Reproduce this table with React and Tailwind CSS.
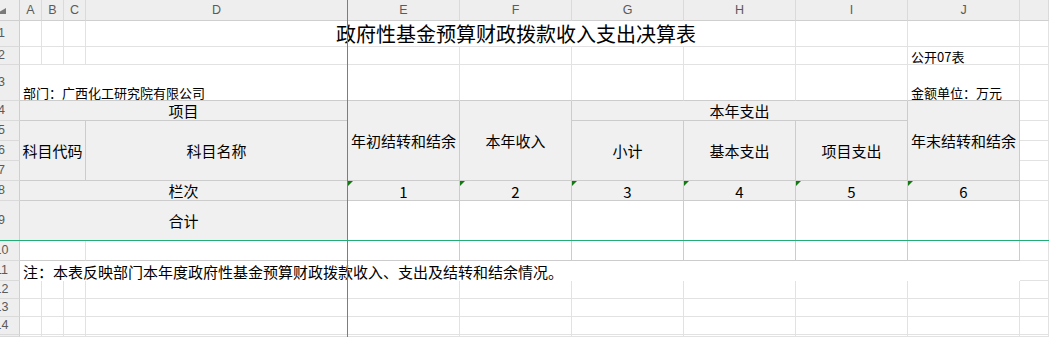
import React from "react";

const cjk = { fontFamily: '"Noto Sans CJK SC", "Noto Sans", sans-serif' };

const COLS = ["A", "B", "C", "D", "E", "F", "G", "H", "I", "J", ""];

function ColHead({ children }) {
  return (
    <div className="flex items-center justify-center bg-[#eeeeee] border-r border-b border-r-[#dadada] border-b-[#cfcfcf] text-[12.5px] text-[#5a5a5a] font-['Liberation_Sans',sans-serif]">
      {children}
    </div>
  );
}

function RowHead({ n }) {
  return (
    <div className="flex items-center overflow-hidden bg-[#eeeeee] border-r border-b border-r-[#cfcfcf] border-b-[#dadada] text-[12.5px] text-[#5a5a5a] font-['Liberation_Sans',sans-serif]">
      <div className="w-[31px] ml-[-14px] shrink-0 text-center leading-none">{n}</div>
    </div>
  );
}

// plain sheet cell with default gridlines
function G({ className = "" }) {
  return <div className={"border-r border-b border-[#e2e2e2] " + className} />;
}

// numbered cell of the table with a "number stored as text" marker
function Num({ n }) {
  return (
    <div className="relative flex items-center justify-center bg-[#f0f0f0] border-r border-b border-[#cccccc] text-[15px] leading-none text-black">
      <span className="absolute left-0 top-0 w-0 h-0 border-t-[5px] border-r-[5px] border-t-[#137a13] border-r-transparent" />
      <span className="pt-[1px]">{n}</span>
    </div>
  );
}

export default function App() {
  return (
    <div
      className="relative grid w-[1049px] h-[337px] overflow-hidden bg-white grid-cols-[20px_22px_22px_22px_262px_112px_112px_112px_112px_112px_112px_1fr] grid-rows-[21px_26px_18px_36px_20px_20px_20px_20px_20px_40px_20px_20px_18px_18px_18px_1fr]"
      style={cjk}
    >
      {/* column headers */}
      <div className="flex items-center overflow-hidden bg-[#eeeeee] border-r border-b border-r-[#cfcfcf] border-b-[#cfcfcf]">
        <svg width="10" height="6" viewBox="0 0 10 6" className="ml-[-4px] mt-[2px] shrink-0">
          <polygon points="10,0 10,6 0,6" fill="#7a7a7a" />
        </svg>
      </div>
      {COLS.map((c, i) => (
        <ColHead key={i}>{c}</ColHead>
      ))}

      {/* row 1: title */}
      <RowHead n="1" />
      <G />
      <G />
      <G />
      <G />
      <div className="col-span-3 flex items-center justify-center border-b border-[#e2e2e2] text-[20px] leading-none text-black whitespace-nowrap">
        政府性基金预算财政拨款收入支出决算表
      </div>
      <G />
      <G />
      <G />
      <G />

      {/* row 2 */}
      <RowHead n="2" />
      <G />
      <G />
      <G />
      <G />
      <G />
      <G />
      <G />
      <G />
      <G />
      <div className="flex items-end pl-[3px] pb-[1px] border-r border-b border-[#e2e2e2] text-[13px] leading-none text-black whitespace-nowrap">
        公开07表
      </div>
      <G />

      {/* row 3 */}
      <RowHead n="3" />
      <div className="col-span-4 flex items-end pl-[3px] pb-[1px] border-r border-b border-r-[#e2e2e2] border-b-[#cccccc] text-[13px] leading-none text-black whitespace-nowrap">
        部门：广西化工研究院有限公司
      </div>
      <G className="border-b-[#cccccc]" />
      <G className="border-b-[#cccccc]" />
      <G className="border-b-[#cccccc]" />
      <G className="border-b-[#cccccc]" />
      <G className="border-b-[#cccccc]" />
      <div className="flex items-end pl-[3px] pb-[1px] border-r border-b border-r-[#e2e2e2] border-b-[#cccccc] text-[13px] leading-none text-black whitespace-nowrap">
        金额单位：万元
      </div>
      <G />

      {/* row 4 */}
      <RowHead n="4" />
      <div className="col-span-4 flex items-center justify-center bg-[#f0f0f0] border-r border-b border-[#cccccc] text-[15px] leading-none text-black">
        项目
      </div>
      <div className="row-span-4 flex items-center justify-center bg-[#f0f0f0] border-r border-b border-[#cccccc] text-[15px] leading-none text-black whitespace-nowrap">
        年初结转和结余
      </div>
      <div className="row-span-4 flex items-center justify-center bg-[#f0f0f0] border-r border-b border-[#cccccc] text-[15px] leading-none text-black">
        本年收入
      </div>
      <div className="col-span-3 flex items-center justify-center bg-[#f0f0f0] border-r border-b border-[#cccccc] text-[15px] leading-none text-black">
        本年支出
      </div>
      <div className="row-span-4 flex items-center justify-center bg-[#f0f0f0] border-r border-b border-[#cccccc] text-[15px] leading-none text-black whitespace-nowrap">
        年末结转和结余
      </div>
      <G />

      {/* row 5 */}
      <RowHead n="5" />
      <div className="col-span-3 row-span-3 flex items-center justify-center bg-[#f0f0f0] border-r border-b border-[#cccccc] text-[15px] leading-none text-black whitespace-nowrap">
        科目代码
      </div>
      <div className="row-span-3 flex items-center justify-center bg-[#f0f0f0] border-r border-b border-[#cccccc] text-[15px] leading-none text-black">
        科目名称
      </div>
      <div className="row-span-3 flex items-center justify-center bg-[#f0f0f0] border-r border-b border-[#cccccc] text-[15px] leading-none text-black">
        小计
      </div>
      <div className="row-span-3 flex items-center justify-center bg-[#f0f0f0] border-r border-b border-[#cccccc] text-[15px] leading-none text-black">
        基本支出
      </div>
      <div className="row-span-3 flex items-center justify-center bg-[#f0f0f0] border-r border-b border-[#cccccc] text-[15px] leading-none text-black">
        项目支出
      </div>
      <G />

      {/* rows 6-7 */}
      <RowHead n="6" />
      <G />
      <RowHead n="7" />
      <G />

      {/* row 8 */}
      <RowHead n="8" />
      <div className="col-span-4 flex items-center justify-center bg-[#f0f0f0] border-r border-b border-[#cccccc] text-[15px] leading-none text-black">
        栏次
      </div>
      <Num n="1" />
      <Num n="2" />
      <Num n="3" />
      <Num n="4" />
      <Num n="5" />
      <Num n="6" />
      <G />

      {/* row 9 */}
      <RowHead n="9" />
      <div className="col-span-4 flex items-center justify-center bg-[#f0f0f0] border-r border-b border-[#cccccc] text-[15px] leading-none text-black">
        合计
      </div>
      <div className="border-r border-b border-[#cccccc]" />
      <div className="border-r border-b border-[#cccccc]" />
      <div className="border-r border-b border-[#cccccc]" />
      <div className="border-r border-b border-[#cccccc]" />
      <div className="border-r border-b border-[#cccccc]" />
      <div className="border-r border-b border-[#cccccc]" />
      <G />

      {/* row 10 */}
      <RowHead n="10" />
      <div className="col-span-3 border-r border-b border-r-[#e2e2e2] border-b-[#cccccc]" />
      <div className="border-r border-b border-r-[#e2e2e2] border-b-[#cccccc]" />
      <div className="border-r border-b border-[#cccccc]" />
      <div className="border-r border-b border-[#cccccc]" />
      <div className="border-r border-b border-[#cccccc]" />
      <div className="border-r border-b border-[#cccccc]" />
      <div className="border-r border-b border-[#cccccc]" />
      <div className="border-r border-b border-[#cccccc]" />
      <G />

      {/* row 11: note */}
      <RowHead n="11" />
      <div className="col-span-10 flex items-center pl-[3px] text-[15px] leading-none text-black whitespace-nowrap">
        注：本表反映部门本年度政府性基金预算财政拨款收入、支出及结转和结余情况。
      </div>
      <G />

      {/* rows 12-14, plus the sliver of row 15 at the bottom edge */}
      {["12", "13", "14", ""].map((n, r) => (
        <React.Fragment key={r}>
          <RowHead n={n} />
          {COLS.map((_, i) => (
            <G key={i} />
          ))}
        </React.Fragment>
      ))}

      {/* frozen pane split lines */}
      <div className="absolute left-[347px] top-0 bottom-0 w-px bg-[#21ad76] z-10" />
      <div className="absolute top-[240px] left-0 right-0 h-px bg-[#21ad76] z-10" />
    </div>
  );
}
